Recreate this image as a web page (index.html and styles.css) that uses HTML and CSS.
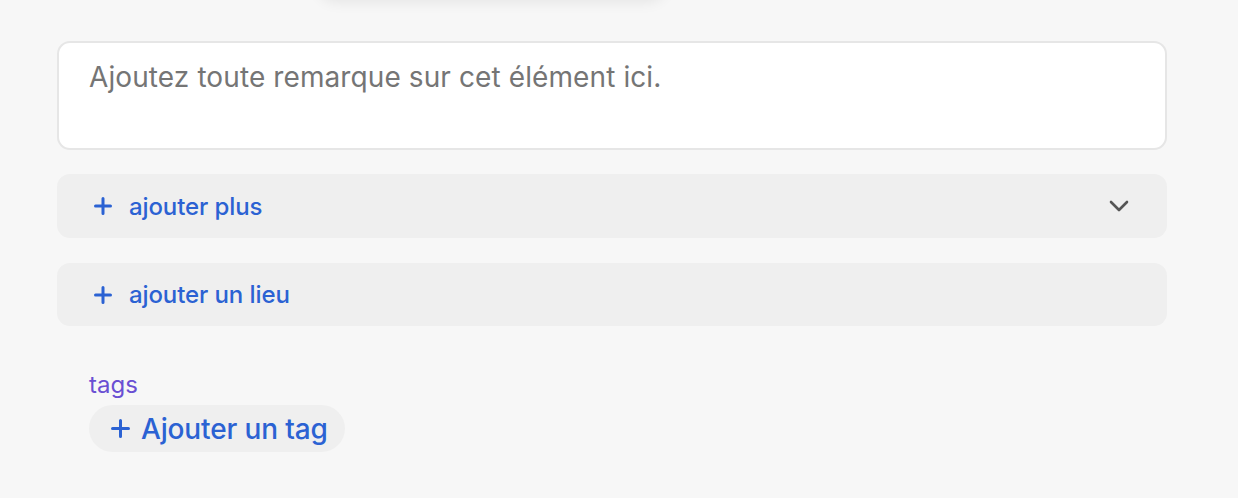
FILE: index.html
```html
<!DOCTYPE html>
<html lang="fr">
<head>
<meta charset="utf-8">
<link rel="stylesheet" href="styles.css">
</head>
<body>
<div class="page">
  <div class="top-card"></div>
  <div class="note">Ajoutez toute remarque sur cet élément ici.</div>
  <div class="bar">
    <span class="plus"><svg width="18" height="18" viewBox="0 0 18 18"><path d="M9 1.5v15M1.5 9h15" stroke="currentColor" stroke-width="3" stroke-linecap="round"/></svg></span>
    <span class="bar-label">ajouter plus</span>
    <span class="chev"><svg width="20" height="12" viewBox="0 0 20 12"><path d="M2 2l8 8 8-8" fill="none" stroke="currentColor" stroke-width="2.6" stroke-linecap="round" stroke-linejoin="round"/></svg></span>
  </div>
  <div class="bar">
    <span class="plus"><svg width="18" height="18" viewBox="0 0 18 18"><path d="M9 1.5v15M1.5 9h15" stroke="currentColor" stroke-width="3" stroke-linecap="round"/></svg></span>
    <span class="bar-label">ajouter un lieu</span>
  </div>
  <div class="tags">
    <div class="tags-title">tags</div>
    <div class="tag-pill">
      <span class="plus"><svg width="19" height="19" viewBox="0 0 19 19"><path d="M9.5 1.5v16M1.5 9.5h16" stroke="currentColor" stroke-width="3" stroke-linecap="round"/></svg></span>
      <span class="tag-label">Ajouter un tag</span>
    </div>
  </div>
</div>
</body>
</html>
```

FILE: styles.css
```css
html, body {
  margin: 0;
  padding: 0;
  background: #f7f7f7;
  font-family: Inter, "Noto Sans", sans-serif;
}
.page {
  width: 1110px;
  margin-left: 57px;
  display: flex;
  flex-direction: column;
}
.top-card {
  align-self: flex-start;
  margin-left: 260px;
  width: 350px;
  height: 40px;
  margin-top: -40px;
  border-radius: 20px;
  background: #f7f7f7;
  box-shadow: 0 2px 14px rgba(0,0,0,0.08);
}
.note {
  margin-top: 41px;
  box-sizing: border-box;
  height: 109px;
  background: #fff;
  border: 2px solid #e6e6e6;
  border-radius: 13px;
  padding: 17px 30px;
  font-size: 28px;
  line-height: 34px;
  color: #757575;
  letter-spacing: 0.1px;
}
.bar {
  display: flex;
  align-items: center;
  height: 64px;
  margin-top: 24px;
  background: #efefef;
  border-radius: 13px;
  padding: 0 38px 0 37px;
  color: #2b62d3;
}
.bar + .bar { margin-top: 25px; height: 63px; }
.plus { display: flex; }
.bar-label {
  margin-left: 17px;
  font-size: 24px;
  font-weight: 500;
  letter-spacing: -0.1px;
  color: #2b62d3;
}
.chev {
  margin-left: auto;
  display: flex;
  color: #555;
}
.tags {
  margin-top: 45px;
  padding-left: 32px;
  display: flex;
  flex-direction: column;
  align-items: flex-start;
}
.tags-title {
  font-size: 24px;
  line-height: 28px;
  color: #6a4fd3;
}
.tag-pill {
  margin-top: 6px;
  display: flex;
  align-items: center;
  height: 47px;
  padding: 0 17px 0 22px;
  background: #efefef;
  border-radius: 24px;
  color: #2b62d3;
}
.tag-label {
  margin-left: 11px;
  font-size: 28px;
  font-weight: 500;
  letter-spacing: -0.15px;
}
```
